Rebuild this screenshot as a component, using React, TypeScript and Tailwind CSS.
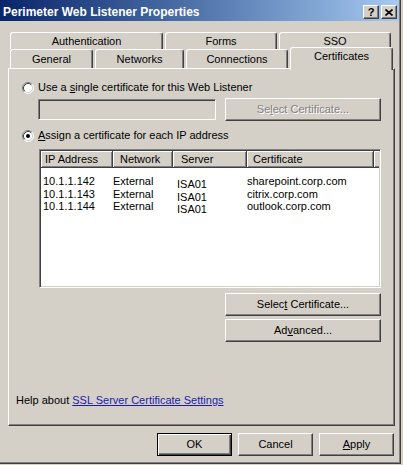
import React from "react";
import clsx from "clsx";

const raised =
  "border border-t-white border-l-white border-r-[#404040] border-b-[#404040] shadow-[inset_-1px_-1px_0_#808080] bg-[#d4d0c8]";

function Radio({ checked }: { checked?: boolean }) {
  return (
    <svg width="12" height="12" viewBox="0 0 12 12" className="shrink-0">
      <circle cx="6" cy="6" r="5" fill="#fff" />
      <path d="M2.11 9.89 A5.5 5.5 0 0 1 9.89 2.11" stroke="#808080" fill="none" />
      <path d="M2.11 9.89 A5.5 5.5 0 0 0 9.89 2.11" stroke="#fff" fill="none" />
      <path d="M2.82 9.18 A4.5 4.5 0 0 1 9.18 2.82" stroke="#404040" fill="none" />
      <path d="M2.82 9.18 A4.5 4.5 0 0 0 9.18 2.82" stroke="#d4d0c8" fill="none" />
      {checked && <circle cx="6" cy="6" r="2" fill="#000" />}
    </svg>
  );
}

function Tab({ label, className }: { label: string; className?: string }) {
  return (
    <div
      className={clsx(
        "flex justify-center rounded-t-[3px] border-l border-t border-r border-l-white border-t-white border-r-[#404040] bg-[#d4d0c8] shadow-[inset_-1px_0_0_#808080]",
        className
      )}
    >
      {label}
    </div>
  );
}

function Button({
  children,
  className,
  disabled,
  isDefault,
}: {
  children: React.ReactNode;
  className?: string;
  disabled?: boolean;
  isDefault?: boolean;
}) {
  return (
    <div
      className={clsx(
        "flex h-[23px] items-center justify-center",
        isDefault
          ? "border border-black bg-[#d4d0c8] shadow-[inset_1px_1px_0_#fff,inset_-1px_-1px_0_#404040,inset_-2px_-2px_0_#808080]"
          : raised,
        disabled && "text-[#808080] [text-shadow:1px_1px_0_#fff]",
        className
      )}
    >
      {children}
    </div>
  );
}

const rows = [
  ["10.1.1.142", "External", "ISA01", "sharepoint.corp.com"],
  ["10.1.1.143", "External", "ISA01", "citrix.corp.com"],
  ["10.1.1.144", "External", "ISA01", "outlook.corp.com"],
];

const headers = [
  { label: "IP Address", cls: "w-[72px] pl-[4px]" },
  { label: "Network", cls: "w-[60px] pl-[7px]" },
  { label: "Server", cls: "w-[74px] pl-[8px]" },
  { label: "Certificate", cls: "w-[127px] pl-[6px]" },
];

const dataCols = [
  "w-[72px] pl-[2px]",
  "w-[60px]",
  "w-[74px] pl-[4px] pt-[3px]",
  "w-[127px]",
];

export default function App() {
  return (
    <div className="h-[465px] w-[403px] overflow-hidden bg-[#d4d0c8] font-['Liberation_Sans',Arial,sans-serif] text-[11px] leading-[13px] text-black">
      <div className="h-[464px] w-[401px] border-r border-b border-[#404040] shadow-[inset_-1px_-1px_0_#808080]">
        {/* title bar */}
        <div className="flex h-[21px] w-[399px] items-center bg-linear-to-r from-[#0a246a] to-[#a6caf0] pt-[3px] pl-[3px] pr-[2px]">
          <span className="text-[12px] font-bold text-white">Perimeter Web Listener Properties</span>
          <div className="ml-auto flex gap-[2px]">
            <div className={clsx(raised, "flex h-[14px] w-[16px] items-center justify-center text-[11px] font-bold leading-none")}>
              ?
            </div>
            <div className={clsx(raised, "flex h-[14px] w-[16px] items-center justify-center")}>
              <svg width="8" height="7" viewBox="0 0 8 7">
                <path d="M0.5 0.5 L7.5 6.5 M7.5 0.5 L0.5 6.5" stroke="#000" strokeWidth="1.6" />
              </svg>
            </div>
          </div>
        </div>

        <div className="pl-[8px]">
          {/* tabs */}
          <div className="ml-[2px] mt-[11px] flex h-[17px] gap-[2px]">
            <Tab label="Authentication" className="w-[153px] items-center pt-[1px]" />
            <Tab label="Forms" className="w-[112px] items-center pt-[1px]" />
            <Tab label="SSO" className="w-[112px] items-center pt-[1px]" />
          </div>
          <div className="relative z-10 ml-[2px] flex h-[19px] items-end gap-[2px]">
            <Tab label="General" className="h-[19px] w-[83px] items-center" />
            <Tab label="Networks" className="h-[19px] w-[89px] items-center" />
            <Tab label="Connections" className="h-[19px] w-[102px] items-center" />
            <Tab label="Certificates" className="-mb-[2px] h-[23px] w-[103px] items-start pt-[2px]" />
          </div>

          {/* panel */}
          <div className="flex h-[358px] w-[387px] flex-col border-t border-l border-r border-b border-t-white border-l-white border-r-[#404040] border-b-[#404040] shadow-[inset_-1px_-1px_0_#808080]">
            <div className="ml-[13px] mt-[12px] flex h-[13px] items-center gap-[4px]">
              <Radio />
              <span>
                Use a <span className="underline">s</span>ingle certificate for this Web Listener
              </span>
            </div>

            <div className="ml-[29px] mt-[4px] flex items-center gap-[9px]">
              <div className="h-[21px] w-[178px] border border-t-[#808080] border-l-[#808080] border-r-white border-b-white bg-[#d4d0c8] shadow-[inset_1px_1px_0_#404040,inset_-1px_-1px_0_#d4d0c8]" />
              <Button disabled className="w-[156px]">
                <span>
                  Se<span className="underline">l</span>ect Certificate...
                </span>
              </Button>
            </div>

            <div className="ml-[13px] mt-[8px] flex h-[13px] items-center gap-[4px]">
              <Radio checked />
              <span>
                <span className="underline">A</span>ssign a certificate for each IP address
              </span>
            </div>

            {/* list view */}
            <div className="ml-[30px] mt-[7px] flex h-[139px] w-[342px] flex-col border border-t-[#808080] border-l-[#808080] border-r-white border-b-white bg-white shadow-[inset_1px_1px_0_#404040,inset_-1px_-1px_0_#d4d0c8] p-[1px]">
              <div className="flex h-[17px] shrink-0">
                {headers.map((h) => (
                  <div
                    key={h.label}
                    className={clsx(
                      "flex items-center border-r border-b border-[#404040] bg-[#d4d0c8] shadow-[inset_1px_1px_0_#fff,inset_-1px_-1px_0_#808080]",
                      h.cls
                    )}
                  >
                    {h.label}
                  </div>
                ))}
                <div className="flex-1 border-b border-[#404040] bg-[#d4d0c8] shadow-[inset_1px_1px_0_#fff,inset_0_-1px_0_#808080]" />
              </div>
              <div className="flex pt-[7px] leading-[12.5px]">
                {dataCols.map((cls, ci) => (
                  <div key={ci} className={clsx("flex flex-col", cls)}>
                    {rows.map((r, ri) => (
                      <span key={ri} className="whitespace-nowrap">
                        {r[ci]}
                      </span>
                    ))}
                  </div>
                ))}
              </div>
            </div>

            <Button className="ml-[216px] mt-[5px] w-[156px]">
              <span>
                Selec<span className="underline">t</span> Certificate...
              </span>
            </Button>
            <Button className="ml-[216px] mt-[3px] w-[156px]">
              <span>
                Ad<span className="underline">v</span>anced...
              </span>
            </Button>

            <div className="ml-[7px] mt-[52px] h-[13px]">
              Help about{" "}
              <span className="text-[#1c1ca8] underline">SSL Server Certificate Settings</span>
            </div>
          </div>

          {/* dialog buttons */}
          <div className="ml-[149px] mt-[7px] flex gap-[6px]">
            <Button isDefault className="w-[75px]">
              OK
            </Button>
            <Button className="w-[75px]">Cancel</Button>
            <Button className="w-[75px]">
              <span>
                <span className="underline">A</span>pply
              </span>
            </Button>
          </div>
        </div>
      </div>
    </div>
  );
}
